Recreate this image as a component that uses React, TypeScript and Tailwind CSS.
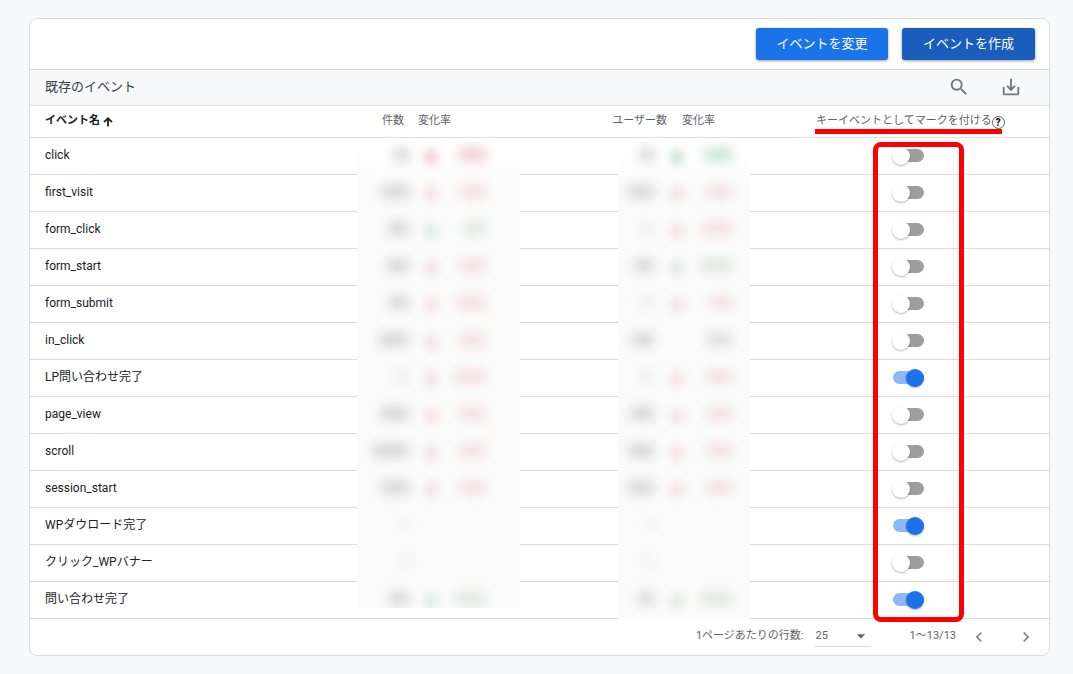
import { useState } from "react";
import {
  MdArrowDropDown,
  MdChevronLeft,
  MdChevronRight,
  MdOutlineSaveAlt,
  MdSearch,
} from "react-icons/md";

type Tone = "down" | "up" | "flat" | "none";

type Hidden = {
  value: number;
  faint?: boolean;
  arrow: Tone;
  change: number;
  changeTone: Tone;
};

type EventRow = {
  name: string;
  key: boolean;
  count: Hidden;
  users: Hidden;
};

const hidden = (
  value: number,
  arrow: Tone,
  change: number,
  changeTone: Tone = arrow,
  faint = false,
): Hidden => ({ value, arrow, change, changeTone, faint });

const initialRows: EventRow[] = [
  { name: "click", key: false, count: hidden(15, "down", 27), users: hidden(14, "up", 27) },
  { name: "first_visit", key: false, count: hidden(28, "down", 26), users: hidden(26, "down", 25) },
  { name: "form_click", key: false, count: hidden(20, "up", 22), users: hidden(14, "down", 30, "down", true) },
  { name: "form_start", key: false, count: hidden(22, "down", 26), users: hidden(20, "up", 32) },
  { name: "form_submit", key: false, count: hidden(20, "down", 30), users: hidden(15, "down", 22, "down", true) },
  { name: "in_click", key: false, count: hidden(30, "down", 26), users: hidden(22, "none", 26, "flat") },
  { name: "LP問い合わせ完了", key: true, count: hidden(14, "down", 32, "down", true), users: hidden(14, "down", 26, "down", true) },
  { name: "page_view", key: false, count: hidden(28, "down", 26), users: hidden(24, "down", 26) },
  { name: "scroll", key: false, count: hidden(36, "down", 26), users: hidden(26, "down", 26) },
  { name: "session_start", key: false, count: hidden(28, "down", 26), users: hidden(26, "down", 26) },
  { name: "WPダウロード完了", key: true, count: hidden(8, "none", 0, "none", true), users: hidden(8, "none", 0, "none", true) },
  { name: "クリック_WPバナー", key: false, count: hidden(8, "none", 0, "none", true), users: hidden(8, "none", 0, "none", true) },
  { name: "問い合わせ完了", key: true, count: hidden(20, "up", 31), users: hidden(15, "up", 31) },
];

const toneClass: Record<Tone, string> = {
  down: "bg-[#f5dddf]",
  up: "bg-[#dbe8de]",
  flat: "bg-[#dddddd]",
  none: "bg-transparent",
};

const strongToneClass: Record<Tone, string> = {
  down: "bg-[#f2c9cd]",
  up: "bg-[#c3e3cd]",
  flat: "bg-[#cccccc]",
  none: "bg-transparent",
};

function BlurredCells({ items, columns }: { items: Hidden[]; columns: string }) {
  return (
    <>
      {items.map((item, i) => {
        const tones = i === 0 ? strongToneClass : toneClass;
        return (
          <div key={i} className={`grid h-[37px] items-center pb-[2px] ${columns}`}>
            <span
              className={`h-[13px] justify-self-end rounded blur-[6px] ${item.faint ? "bg-[#eeeeee]" : "bg-[#d4d4d4]"}`}
              style={{ width: item.value }}
            />
            <span className={`mt-1 h-[14px] w-3 justify-self-center rounded blur-[5px] ${tones[item.arrow]}`} />
            <span
              className={`h-[13px] justify-self-end rounded blur-[6px] ${tones[item.changeTone]}`}
              style={{ width: item.change }}
            />
          </div>
        );
      })}
    </>
  );
}

function SortArrow() {
  return (
    <svg width="10" height="10" viewBox="0 0 10 10" fill="none" stroke="currentColor" strokeWidth="1.8" aria-hidden="true">
      <path d="M5 9.5V1.5M1 5.2L5 1.3L9 5.2" />
    </svg>
  );
}

const thClass = "relative h-8 border-b border-[#dadce0] font-normal";

export default function App() {
  const [rows, setRows] = useState(initialRows);

  const toggle = (index: number) =>
    setRows((current) => current.map((row, i) => (i === index ? { ...row, key: !row.key } : row)));

  return (
    <main className="min-h-screen bg-[#f8f9fb] py-[18px] pr-[23px] pl-[29px] font-['Roboto','Noto_Sans_CJK_JP',sans-serif] text-xs text-[#202124]">
      <section className="rounded-lg border border-[#dadce0] bg-white">
        <div className="flex h-[51px] items-center justify-end gap-[14px] border-b border-[#dadce0] px-[14px]">
          <button
            type="button"
            className="h-8 w-[132px] rounded-[3px] bg-[#1a73e8] text-[13px] text-white shadow-[0_1px_3px_rgba(0,0,0,0.4)]"
          >
            イベントを変更
          </button>
          <button
            type="button"
            className="h-8 w-[133px] rounded-[3px] bg-[#1b5dba] text-[13px] text-white shadow-[0_1px_3px_rgba(0,0,0,0.4)]"
          >
            イベントを作成
          </button>
        </div>

        <div className="flex h-9 items-center justify-between border-b border-[#dadce0] bg-[#f8f9fb] pr-[27px] pl-[15px]">
          <h2 className="pb-[2px] text-[13px] text-[#3c4043]">既存のイベント</h2>
          <div className="flex items-center gap-[30px] pb-[2px] text-[#757575]">
            <button type="button" aria-label="検索">
              <MdSearch size={22} />
            </button>
            <button type="button" aria-label="ダウンロード">
              <MdOutlineSaveAlt size={22} />
            </button>
          </div>
        </div>

        <table className="w-full table-fixed border-separate border-spacing-0 text-left">
          <colgroup>
            <col />
            <col className="w-[54px]" />
            <col className="w-[207px]" />
            <col className="w-[56px]" />
            <col className="w-[76px]" />
            <col className="w-[299px]" />
          </colgroup>
          <thead className="text-[11px] text-[#5f6368]">
            <tr>
              <th scope="col" className="h-8 border-b border-[#dadce0] pl-[15px] font-bold text-[#202124]">
                <span className="flex items-center gap-[3px]">
                  イベント名
                  <SortArrow />
                </span>
              </th>
              <th scope="col" className={`${thClass} pr-[7px] text-right`}>
                件数
                <div
                  aria-hidden="true"
                  className="absolute top-full left-0 z-10 mt-1 h-[467px] w-[163px] overflow-hidden bg-linear-to-b from-white to-[#fbfbfb] to-10%"
                >
                  <div className="-mt-1">
                    <BlurredCells items={rows.map((row) => row.count)} columns="grid-cols-[52px_44px_33px]" />
                  </div>
                </div>
              </th>
              <th scope="col" className={`${thClass} pl-[7px]`}>
                変化率
              </th>
              <th scope="col" className={`${thClass} pr-[7px] text-right whitespace-nowrap`}>
                <span className="float-right">ユーザー数</span>
                <div
                  aria-hidden="true"
                  className="absolute top-full left-0 z-10 mt-1 h-[479px] w-[132px] overflow-hidden bg-linear-to-b from-white to-[#fbfbfb] to-10%"
                >
                  <div className="-mt-1">
                    <BlurredCells items={rows.map((row) => row.users)} columns="grid-cols-[36px_46px_32px]" />
                  </div>
                </div>
              </th>
              <th scope="col" className={`${thClass} pl-2`}>
                変化率
              </th>
              <th scope="col" className={`${thClass} pl-[66px] whitespace-nowrap`}>
                <span className="flex items-center">
                  キーイベントとしてマークを付ける
                  <button
                    type="button"
                    aria-label="ヘルプ"
                    className="mt-[2px] flex h-[13px] w-[13px] items-center justify-center rounded-full border border-[#5f6368] text-[10px] font-black text-[#202124]"
                  >
                    ?
                  </button>
                </span>
                <div aria-hidden="true" className="absolute top-[23px] left-[65px] h-[5px] w-[187px] bg-[#ff0000]" />
                <div
                  aria-hidden="true"
                  className="pointer-events-none absolute top-full left-[123px] z-20 mt-[5px] h-[480px] w-[91px] rounded-lg border-5 border-[#ff0000]"
                />
              </th>
            </tr>
          </thead>
          <tbody>
            {rows.map((row, index) => (
              <tr key={row.name}>
                <td className="h-[37px] border-b border-[#dadce0] pb-[3px] pl-[15px]">{row.name}</td>
                <td className="border-b border-[#dadce0]" />
                <td className="border-b border-[#dadce0]" />
                <td className="border-b border-[#dadce0]" />
                <td className="border-b border-[#dadce0]" />
                <td className="border-b border-[#dadce0] pl-[142px]">
                  <input
                    type="checkbox"
                    role="switch"
                    aria-label={row.name}
                    checked={row.key}
                    onChange={() => toggle(index)}
                    className="relative block h-[18px] w-8 cursor-pointer appearance-none before:absolute before:top-[2px] before:left-px before:h-[13px] before:w-[31px] before:rounded-full before:bg-[#9e9e9e] after:absolute after:top-0 after:left-0 after:h-[18px] after:w-[18px] after:rounded-full after:bg-white after:shadow-[0_1px_2px_rgba(0,0,0,0.3)] checked:before:bg-[#8cb8f3] checked:after:left-[14px] checked:after:bg-[#1a73e8]"
                  />
                </td>
              </tr>
            ))}
          </tbody>
        </table>

        <div className="flex h-9 items-center justify-end pr-[13px] pb-px text-[11px] text-[#5f6368]">
          <label htmlFor="page-size" className="mr-[11px]">
            1ページあたりの行数:
          </label>
          <div className="relative mr-[39px]">
            <select
              id="page-size"
              defaultValue="25"
              className="block h-5 w-[56px] appearance-none border-b border-[#dadce0] pl-px text-[11px]"
            >
              <option>10</option>
              <option>25</option>
              <option>50</option>
            </select>
            <MdArrowDropDown size={20} className="pointer-events-none absolute -top-px right-0" />
          </div>
          <span className="mr-[13px]">1～13/13</span>
          <div className="flex items-center gap-[27px] text-[#80868b]">
            <button type="button" aria-label="前のページ">
              <MdChevronLeft size={20} />
            </button>
            <button type="button" aria-label="次のページ">
              <MdChevronRight size={20} />
            </button>
          </div>
        </div>
      </section>
    </main>
  );
}
